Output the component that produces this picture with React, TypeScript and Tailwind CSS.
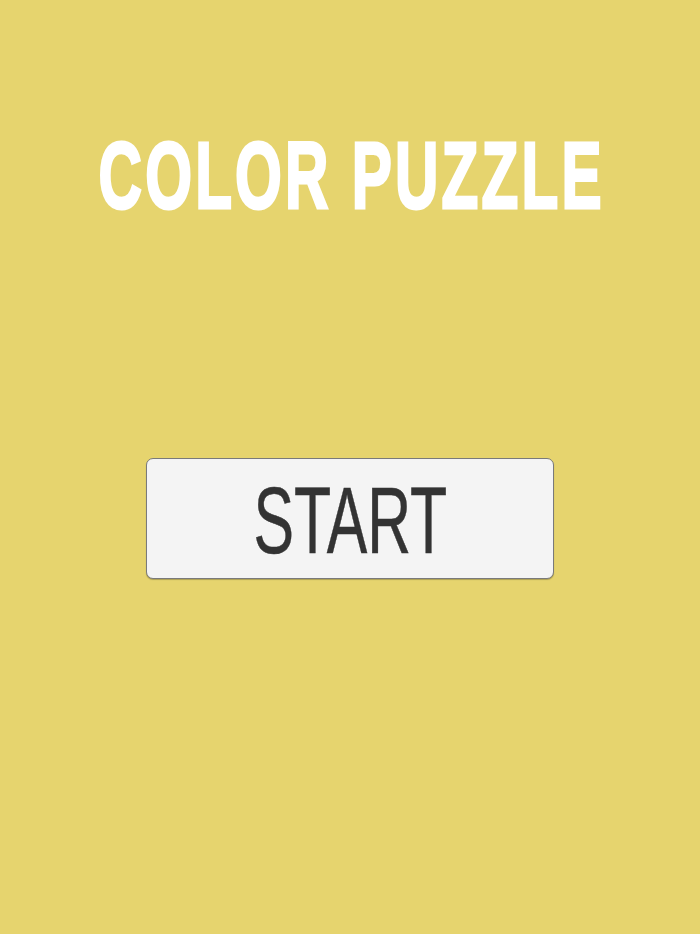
import React from 'react';

const App: React.FC = () => {
  return (
    <div className="min-h-screen w-full bg-[#e6d46e] flex flex-col items-center pt-[129px]">
      {/* game title, heavy condensed look */}
      <h1 className="text-[94px] leading-none font-bold text-white font-['Liberation_Sans',Arial,sans-serif] [-webkit-text-stroke:3px_white] tracking-[5px] pl-[5px] scale-x-[0.64] whitespace-nowrap select-none">
        COLOR PUZZLE
      </h1>

      <button
        type="button"
        className="mt-[235px] w-[408px] h-[121px] bg-[#f4f4f4] border border-[#7a7a7a] rounded-[7px] shadow-[0_1px_1px_rgba(0,0,0,0.25)] flex items-center justify-center pt-[4px]"
      >
        <span className="text-[95px] leading-none text-[#333333] font-['Liberation_Sans',Arial,sans-serif] [-webkit-text-stroke:0.5px_#333333] scale-x-[0.64] whitespace-nowrap">
          START
        </span>
      </button>
    </div>
  );
};

export default App;
